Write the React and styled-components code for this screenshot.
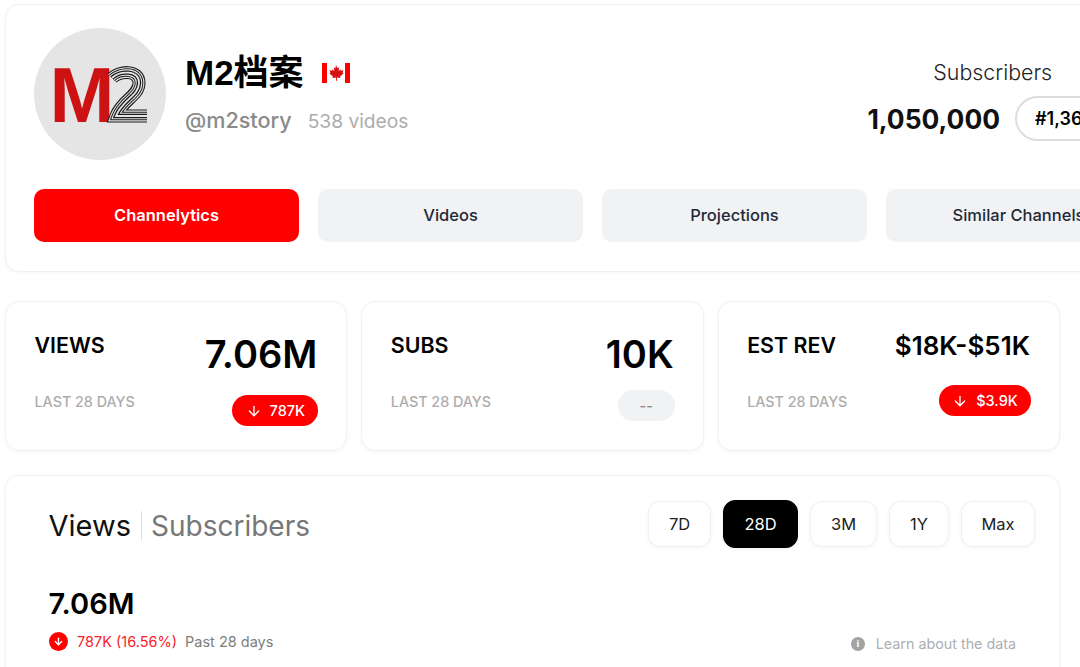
import React from "react";
import styled, { createGlobalStyle } from "styled-components";
import { ArrowDown } from "lucide-react";

const GlobalStyle = createGlobalStyle`
  html, body {
    margin: 0;
    height: 100%;
    overflow: hidden;
    background: #fff;
    font-family: Inter, "Noto Sans CJK SC", sans-serif;
    color: #000;
  }
`;

const Page = styled.div`
  width: 1080px;
  height: 667px;
  overflow: hidden;
  box-sizing: border-box;
  padding: 4px 0 0 5px;
`;

const Card = styled.section`
  box-sizing: border-box;
  background: #fff;
  border: 1px solid #f1f1f3;
  border-radius: 14px;
  box-shadow: 0 1px 4px rgba(0, 0, 0, 0.04);
`;

const ProfileCard = styled(Card)`
  width: 1175px;
  height: 268px;
  padding: 23px 28px 0;
`;

const ProfileRow = styled.div`
  display: flex;
  align-items: flex-start;
  justify-content: space-between;
  height: 161px;
`;

const Identity = styled.div`
  display: flex;
  gap: 19px;
`;

const Avatar = styled.div`
  width: 132px;
  height: 132px;
  border-radius: 50%;
  background: #e5e5e5;
  flex: none;
`;

const Names = styled.div`
  display: flex;
  flex-direction: column;
  padding-top: 20px;
`;

const TitleRow = styled.div`
  display: flex;
  align-items: center;
  gap: 18px;
  height: 50px;
`;

const Title = styled.h1`
  margin: 0;
  font-size: 35px;
  line-height: 40px;
  font-weight: 700;
  font-family: "Liberation Sans", "Noto Sans CJK SC", sans-serif;
`;

const Meta = styled.div`
  display: flex;
  align-items: baseline;
  gap: 16px;
  margin-top: 9px;
`;

const Handle = styled.span`
  font-size: 21.6px;
  font-weight: 500;
  color: #8a8a8a;
`;

const VideoCount = styled.span`
  font-size: 19.2px;
  color: #adadad;
`;

const SubscriberBlock = styled.div`
  display: flex;
  flex-direction: column;
  align-items: center;
  margin: 31px 33px 0 0;
`;

const SubscriberLabel = styled.div`
  font-size: 21.4px;
  font-weight: 300;
  line-height: 26px;
  color: #222;
`;

const SubscriberRow = styled.div`
  display: flex;
  align-items: center;
  gap: 15px;
  margin-top: 11px;
`;

const SubscriberCount = styled.div`
  font-size: 26.4px;
  font-weight: 700;
  color: #111;
`;

const RankPill = styled.div`
  box-sizing: border-box;
  width: 103px;
  height: 45px;
  border: 2px solid #dcdcdc;
  border-radius: 23px;
  padding-left: 18px;
  display: flex;
  align-items: center;
  font-size: 18px;
  font-weight: 600;
  white-space: nowrap;
`;

const Tabs = styled.nav`
  display: flex;
  gap: 19px;
`;

const Tab = styled.button`
  width: 265px;
  height: 53px;
  flex: none;
  border: 0;
  border-radius: 10px;
  padding: 0 0 2px;
  font: 500 16.5px Inter, sans-serif;
  white-space: nowrap;
  background: ${(p) => (p.$active ? "#ff0000" : "#f1f2f4")};
  color: ${(p) => (p.$active ? "#fff" : "#1f2937")};
  font-weight: ${(p) => (p.$active ? 600 : 500)};
`;

const StatRow = styled.div`
  display: flex;
  gap: 14px;
  margin-top: 29px;
  width: 1055px;
`;

const StatCard = styled(Card)`
  flex: 1;
  height: 150px;
  padding: 26px 29px 0 28.5px;
  display: grid;
  grid-template-columns: auto auto;
  grid-template-rows: 56px auto;
  justify-content: space-between;
`;

const StatLabel = styled.div`
  font-size: 21.4px;
  line-height: 34px;
  font-weight: 600;
`;

const StatValue = styled.div`
  justify-self: end;
  font-weight: 600;
  font-size: ${(p) => (p.$small ? "26px" : "38px")};
  line-height: ${(p) => (p.$small ? "36px" : "52px")};
`;

const StatCaption = styled.div`
  font-size: 14.3px;
  font-weight: 500;
  line-height: 20px;
  color: #adadad;
  margin-top: 8px;
`;

const Delta = styled.div`
  justify-self: end;
  align-self: start;
  display: flex;
  align-items: center;
  justify-content: center;
  gap: 8px;
  box-sizing: border-box;
  width: ${(p) => p.$width}px;
  height: 31px;
  margin-top: ${(p) => p.$top}px;
  margin-right: -1px;
  border-radius: 16px;
  font-size: 14.5px;
  font-weight: 500;
  background: ${(p) => (p.$flat ? "#f1f2f4" : "#ff0000")};
  color: ${(p) => (p.$flat ? "#8a8a8a" : "#fff")};
`;

const ChartCard = styled(Card)`
  margin-top: 24px;
  width: 1055px;
  height: 240px;
  padding: 24px 24px 0 42.5px;
`;

const ChartHead = styled.div`
  display: flex;
  justify-content: space-between;
  align-items: flex-start;
`;

const MetricTabs = styled.div`
  display: flex;
  align-items: center;
  height: 52px;
`;

const Metric = styled.span`
  font-size: ${(p) => (p.$active ? "29px" : "28px")};
  color: ${(p) => (p.$active ? "#111" : "#777")};
  padding-right: ${(p) => (p.$active ? "10px" : "0")};
  margin-right: ${(p) => (p.$active ? "9px" : "0")};
  border-right: ${(p) => (p.$active ? "1px solid #dedede" : "none")};
  line-height: 30px;
`;

const Ranges = styled.div`
  display: flex;
  gap: 12px;
  align-items: center;
  height: 47px;
`;

const RangeButton = styled.button`
  box-sizing: border-box;
  width: ${(p) => p.$width}px;
  height: ${(p) => (p.$active ? "48px" : "46px")};
  padding: 0;
  border: 1px solid ${(p) => (p.$active ? "#000" : "#f0f0f0")};
  border-radius: 12px;
  background: ${(p) => (p.$active ? "#000" : "#fff")};
  color: ${(p) => (p.$active ? "#fff" : "#222")};
  font: 400 16.5px Inter, sans-serif;
  box-shadow: 0 1px 4px rgba(0, 0, 0, 0.05);
`;

const Total = styled.div`
  margin-top: 34px;
  font-size: 29px;
  line-height: 36px;
  font-weight: 600;
`;

const ChangeRow = styled.div`
  display: flex;
  align-items: center;
  justify-content: space-between;
  margin-top: 8px;
  padding-right: 19px;
`;

const Change = styled.div`
  display: flex;
  align-items: center;
  font-size: 14.5px;
`;

const DownDot = styled.span`
  width: 19px;
  height: 19px;
  border-radius: 50%;
  background: #ff0000;
  color: #fff;
  display: flex;
  align-items: center;
  justify-content: center;
  margin-right: 9.5px;
`;

const ChangeValue = styled.span`
  color: #f5222d;
  margin-right: 8px;
`;

const ChangePeriod = styled.span`
  color: #7d7d7d;
`;

const LearnLink = styled.div`
  display: flex;
  align-items: center;
  gap: 11px;
  font-size: 14.3px;
  color: #adb0b5;
  margin-top: 5px;
`;

const InfoDot = styled.span`
  width: 14px;
  height: 14px;
  border-radius: 50%;
  background: #a3a3a3;
  color: #fff;
  font: 700 10px/14px "Liberation Serif", serif;
  text-align: center;
`;

const two = "M78 50 C85 43 105 41 105 55 C105 68 88 72 82 88 L113 88";

function M2Logo() {
  return (
    <svg width="132" height="132" viewBox="0 0 132 132">
      <text x="15.5" y="94" fontFamily="Liberation Sans, sans-serif" fontWeight="700" fontSize="78" fill="#cc1212">M</text>
      <g fill="none">
        <path d={two} stroke="#1c1c1c" strokeWidth="13" />
        <path d={two} stroke="#e5e5e5" strokeWidth="10.8" />
        <path d={two} stroke="#1c1c1c" strokeWidth="8.6" />
        <path d={two} stroke="#e5e5e5" strokeWidth="6.6" />
        <path d={two} stroke="#1c1c1c" strokeWidth="4.4" />
        <path d={two} stroke="#e5e5e5" strokeWidth="1.8" />
      </g>
    </svg>
  );
}

function CanadaFlag() {
  return (
    <svg width="28" height="20" viewBox="0 0 28 20">
      <rect width="28" height="20" fill="#fff" />
      <rect width="5" height="20" fill="#f00" />
      <rect x="23" width="5" height="20" fill="#f00" />
      <path
        fill="#d81010"
        d="M14 2.2l1.6 3 1.7-.9-.7 4 1.9-2 .5 1.4 2.4-.4-.8 2.6 1 .6-3.6 3 .5 1.4-3.6-.5.1 3.4h-1l.1-3.4-3.6.5.5-1.4-3.6-3 1-.6-.8-2.6 2.4.4.5-1.4 1.9 2-.7-4 1.7.9z"
      />
    </svg>
  );
}

const tabs = ["Channelytics", "Videos", "Projections", "Similar Channels"];

const stats = [
  { label: "VIEWS", value: "7.06M", delta: "787K", width: 86, top: 11 },
  { label: "SUBS", value: "10K", delta: "--", flat: true, width: 57, top: 6 },
  { label: "EST REV", value: "$18K-$51K", small: true, delta: "$3.9K", width: 92, top: 1 },
];

const ranges = [
  { label: "7D", width: 63 },
  { label: "28D", width: 75, active: true },
  { label: "3M", width: 67 },
  { label: "1Y", width: 60 },
  { label: "Max", width: 74 },
];

export default function App() {
  return (
    <Page>
      <GlobalStyle />
      <ProfileCard>
        <ProfileRow>
          <Identity>
            <Avatar>
              <M2Logo />
            </Avatar>
            <Names>
              <TitleRow>
                <Title>M2档案</Title>
                <CanadaFlag />
              </TitleRow>
              <Meta>
                <Handle>@m2story</Handle>
                <VideoCount>538 videos</VideoCount>
              </Meta>
            </Names>
          </Identity>
          <SubscriberBlock>
            <SubscriberLabel>Subscribers</SubscriberLabel>
            <SubscriberRow>
              <SubscriberCount>1,050,000</SubscriberCount>
              <RankPill>#1,368</RankPill>
            </SubscriberRow>
          </SubscriberBlock>
        </ProfileRow>
        <Tabs>
          {tabs.map((t, i) => (
            <Tab key={t} $active={i === 0}>{t}</Tab>
          ))}
        </Tabs>
      </ProfileCard>

      <StatRow>
        {stats.map((s) => (
          <StatCard key={s.label}>
            <StatLabel>{s.label}</StatLabel>
            <StatValue $small={s.small}>{s.value}</StatValue>
            <StatCaption>LAST 28 DAYS</StatCaption>
            <Delta $flat={s.flat} $width={s.width} $top={s.top}>
              {!s.flat && <ArrowDown size={16} strokeWidth={2} />}
              {s.delta}
            </Delta>
          </StatCard>
        ))}
      </StatRow>

      <ChartCard>
        <ChartHead>
          <MetricTabs>
            <Metric $active>Views</Metric>
            <Metric>Subscribers</Metric>
          </MetricTabs>
          <Ranges>
            {ranges.map((r) => (
              <RangeButton key={r.label} $active={r.active} $width={r.width}>{r.label}</RangeButton>
            ))}
          </Ranges>
        </ChartHead>
        <Total>7.06M</Total>
        <ChangeRow>
          <Change>
            <DownDot><ArrowDown size={11} strokeWidth={3} /></DownDot>
            <ChangeValue>787K (16.56%)</ChangeValue>
            <ChangePeriod>Past 28 days</ChangePeriod>
          </Change>
          <LearnLink>
            <InfoDot>i</InfoDot>
            Learn about the data
          </LearnLink>
        </ChangeRow>
      </ChartCard>
    </Page>
  );
}
